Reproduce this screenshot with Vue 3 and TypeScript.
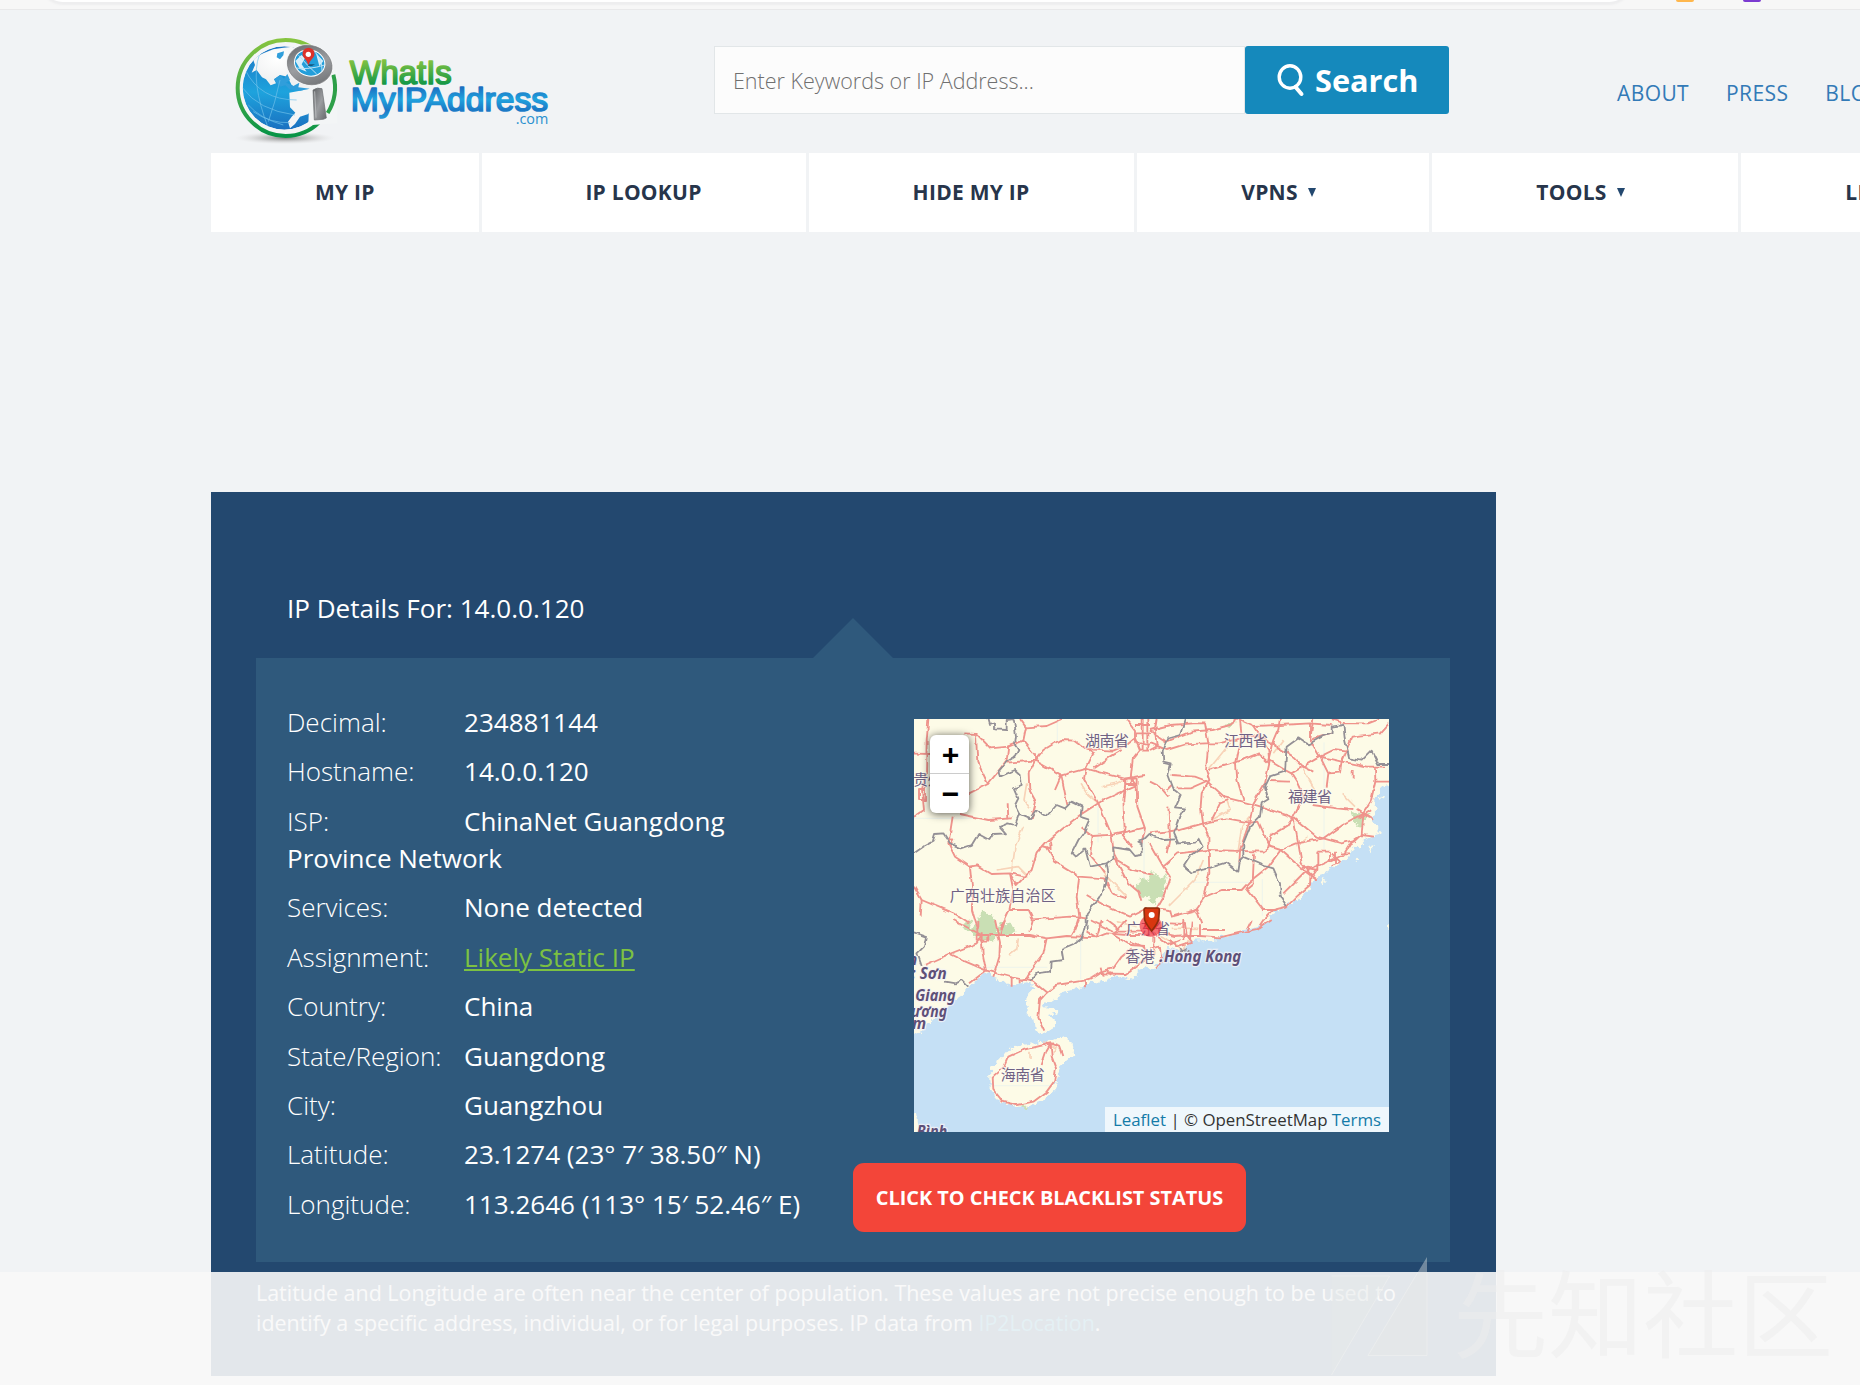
<script setup lang="ts">
interface NavItem { label: string; width: number; arrow?: boolean }
interface Detail { label: string; value: string; link?: boolean }
interface MapTile { shift: string; roads: string[]; minor: string[]; borders: string[] }

const navItems: NavItem[] = [
  { label: 'MY IP', width: 267.5 },
  { label: 'IP LOOKUP', width: 324 },
  { label: 'HIDE MY IP', width: 325 },
  { label: 'VPNS', width: 292, arrow: true },
  { label: 'TOOLS', width: 306, arrow: true },
  { label: 'LEARN', width: 306, arrow: true },
]

const details: Detail[] = [
  { label: 'Decimal:', value: '234881144' },
  { label: 'Hostname:', value: '14.0.0.120' },
  { label: 'ISP:', value: 'ChinaNet Guangdong Province Network' },
  { label: 'Services:', value: 'None detected' },
  { label: 'Assignment:', value: 'Likely Static IP', link: true },
  { label: 'Country:', value: 'China' },
  { label: 'State/Region:', value: 'Guangdong' },
  { label: 'City:', value: 'Guangzhou' },
  { label: 'Latitude:', value: '23.1274 (23° 7′ 38.50″ N)' },
  { label: 'Longitude:', value: '113.2646 (113° 15′ 52.46″ E)' },
]

const tiles: MapTile[] = [
  {
    shift: 'translate(-42 -27)',
    roads: [
      'M85 27L80 95L78 190L66 238L72 300L42 320', 'M42 131L90 132', 'M57 237H75V270H57Z',
      'M190 70L230 72L272 115L325 110L370 92L378 52L360 27', 'M378 52L440 48L488 27',
      'M228 75L232 155L264 222L290 190L320 150L325 110', 'M207 250L264 222', 'M320 158L405 152L430 120L480 90L525 92L560 118L640 122L680 105L705 85',
      'M370 92L405 135L405 152L484 196L558 176L580 130L560 118', 'M405 152L386 190L388 240L408 275L395 325', 'M484 196L502 285', 'M484 196L465 240',
      'M558 176L674 206L735 195', 'M680 27L705 60L705 85L720 122H750', 'M705 45H750M708 70H750M706 100H750M728 27V122M742 27V122', 'M720 122L698 150L692 206L710 226L712 290L735 355L725 400', 'M674 206L676 222L670 270L674 355L668 375L700 415',
      'M676 206H710V222H676ZM692 206V222', 'M580 175L632 140L665 120', 'M558 176L552 205L595 280L635 375L640 420L655 465L685 520L715 545L724 575',
      'M710 226L610 270L540 315L495 350L440 395L410 430L395 480L375 500L350 525L332 495', 'M545 355L578 378L640 374L735 352', 'M578 378L570 435L600 470L615 490',
      'M158 320L150 370L145 400L165 440L210 470L216 530L216 600L234 660', 'M180 312L265 330L335 325', 'M323 280L325 328', 'M210 470L232 466L275 492L330 490L375 500', 'M428 408L452 415L450 395', 'M440 410L465 455L538 500L615 505L635 550L680 565',
      'M538 500L530 560L538 620L525 660', 'M42 530L65 570L160 610L205 640', 'M330 490L340 540L328 600L300 660', 'M328 600L385 600L398 628L510 620L560 625', 'M640 445L700 480L760 495', 'M560 555L620 590L690 620L730 600', 'M65 570L62 620',
      'M145 388H160L150 405L145 388',
    ],
    minor: ['M370 350L345 410L335 485', 'M380 220L372 270L390 295', 'M605 230L650 220L670 210', 'M540 220L560 250L595 280', 'M290 480L355 470L385 500', 'M600 470L620 500L680 560'],
    borders: [
      'M265 27L270 45L285 40L285 58L320 60V30L340 27L345 50L348 80L345 105L355 120L345 140L320 155L295 185L300 200L345 180L362 195L365 225L342 235L355 265L345 285L358 310L345 345L325 340L300 350L318 370L280 372L268 390L235 372L215 405L185 415L150 400L130 370L105 372L98 395L70 410L42 430',
      'M355 310L390 325L408 300L440 318L470 285L495 295L515 275L545 290L542 320L568 328L550 370L535 390L515 430L525 440L555 415L570 470L620 460L625 490L615 530L600 560L575 590L560 610L560 660',
      'M620 460L640 445V412L690 420L705 438L725 435V400L715 395L730 390L750 370',
    ],
  },
  {
    shift: 'translate(708 -27)',
    roads: [
      'M0 60L60 45L130 40L165 40L175 100L168 180L178 210L155 250L152 290L160 345L175 380L178 490L160 560', 'M0 62L50 95L125 65L185 60L240 45L265 27L310 48L390 45L480 40L545 45',
      'M0 100L50 120L105 103L165 100L205 100L320 75L380 110', 'M20 27L15 60L20 110L0 120', 'M270 30L275 80L258 160L262 210L280 270', 'M310 48L355 120L358 160L345 220L310 280L300 330L270 420L268 460',
      'M390 27L385 55L370 90L355 150L405 180L424 190L440 215L460 260L430 320', 'M175 180L258 157L325 130L358 160', 'M65 195L135 200L170 213L225 262L310 283L350 295L430 322L500 380L575 400L620 388',
      'M80 235L120 235L170 213', 'M0 370L90 360L160 340L230 325L300 338L325 335L360 410L392 420L460 480L500 510', 'M185 330L210 280L235 270', 'M430 322L410 350L360 380L355 415L340 425L175 420L85 430L40 470', 'M392 420L355 470L298 515L275 540L215 540L165 560L135 600',
      'M0 400L40 470L60 500L40 560L20 595L60 600L65 620L140 600L155 640', 'M312 430L308 520L290 535L340 600L380 600', 'M430 322L445 400L455 460L482 490L480 525L440 560L410 590L370 600L340 630L320 660',
      'M392 420L440 400L520 385L575 345L640 310L672 330', 'M400 550L470 480L510 465L580 435L605 395L635 375L672 380', 'M490 27L480 90L510 140L535 190L530 230', 'M424 190L510 140L575 155L650 170L705 170', 'M510 140L550 120L590 125', 'M380 110L430 140L460 170L490 185', 'M535 190L570 188L575 155L590 120L605 80L690 70L717 40', 'M480 40L480 90L545 70', 'M545 27L585 40L655 40L690 27', 'M675 172L676 215H717', 'M676 215L662 275L640 310L635 375L615 395', 'M608 180V205',
      'M488 285L560 295L610 300', 'M505 425H540V455M505 425V480L455 470', 'M545 430L570 455L545 465M555 425V460M570 430H600M450 475L490 495L500 480', 'M360 213L420 215', 'M50 240L65 225', 'M620 300L660 325M625 325L665 300',
      'M55 290L60 380L50 430', 'M0 215L30 230L55 260',
    ],
    minor: ['M240 100L175 180', 'M185 330L240 300L230 270', 'M265 420L275 350L300 320', 'M455 170L495 240', 'M575 250L615 290', 'M60 585L135 510L160 450', 'M400 90L370 130', 'M445 400L475 380'],
    borders: [
      'M105 27L90 75L55 85L38 125L40 155L62 160L55 195L72 240L92 255L75 292L102 295L88 320L72 370L85 400L135 398L145 385L158 410L120 440L102 468L125 488L165 478L230 458L265 485L270 450L280 440L280 400L300 350L330 320L335 280L355 268L345 230L360 200L405 185L410 110L445 85L460 95L475 103L520 78L545 70V50L580 45L585 90L598 145L635 152L665 122L685 162H717',
      'M0 375L40 390L75 388', 'M278 440L345 468L370 475L390 520L392 560L410 588',
    ],
  },
  {
    shift: 'translate(-42 603)',
    roads: [
      'M75 135L148 102L230 70L245 45L160 0', 'M148 102L190 122L260 152L335 172L400 185L440 218L420 240L415 290L436 335', 'M210 190L258 152L248 100L246 65', 'M230 45H265V62H230ZM245 37V72', 'M232 0V45', 'M268 45H390L440 55L430 100L400 140L380 175L360 182', 'M285 0L300 70L298 110L280 170M315 0L300 45M398 0L388 35', 'M440 55L500 48L590 52L620 40L680 45L750 45', 'M540 0L515 45M560 35L590 52L605 0M680 0L640 45L690 75L735 78',
      'M440 218L470 195L550 182L575 175L610 152L640 145L665 110L695 85', 'M600 160L680 162L710 140L735 120', 'M335 170V200M362 178V190M555 182V202M602 140L608 170M620 150L630 165', 'M570 0L640 35H735M620 0L660 30M690 65L730 80L745 100',
      'M452 370L440 390L425 435', 'M452 370L455 410L468 445L462 485L440 515L400 545L350 555L308 545L280 510L278 470L312 440L325 410L370 390L452 370L480 380L490 408', 'M438 372L462 370',
    ],
    minor: ['M355 55L350 90L330 105', 'M390 395V415', 'M430 365L470 385L460 400', 'M650 5L710 20'],
    borders: ['M42 37L78 50L72 80L52 100L65 138', 'M135 185L165 190L185 180L205 200', 'M390 185L410 160L450 155L452 125L490 120L485 90L520 75L545 55L560 0'],
  },
  {
    shift: 'translate(708 603)',
    roads: ['M60 10L105 12L110 48L150 48L150 10M100 0V60M125 5L120 60', 'M40 40L75 48L110 45L125 65L80 80L60 60', 'M150 48L210 52L270 38L330 25L365 0', 'M155 30H225M290 30L305 0', 'M0 35L25 50L55 75L90 60M0 85L30 80L35 130L15 145M10 50V110'],
    minor: ['M60 60L100 90L115 60', 'M30 45L70 70', 'M65 25H145'],
    borders: ['M90 95L110 85M90 85L120 100'],
  },
]
</script>

<template>
  <div class="page">
    <div class="browser-edge">
      <div class="address-pill"></div>
      <i class="ext orange"></i><i class="ext purple"></i>
    </div>

    <header class="header">
      <svg class="logo" viewBox="99 108 951 327" width="317" height="109">
        <defs>
          <linearGradient id="ring" x1="0" y1="0" x2="0" y2="1"><stop offset="0" stop-color="#86c440" /><stop offset=".6" stop-color="#3ba648" /><stop offset="1" stop-color="#079447" /></linearGradient>
          <linearGradient id="ocean" x1="0" y1="0" x2="0" y2="1"><stop offset="0" stop-color="#1b75c4" /><stop offset=".55" stop-color="#1ea3dd" /><stop offset="1" stop-color="#1a70c0" /></linearGradient>
          <linearGradient id="greenText" x1="0" y1="180" x2="0" y2="255" gradientUnits="userSpaceOnUse"><stop offset="0" stop-color="#83c341" /><stop offset="1" stop-color="#109647" /></linearGradient>
          <linearGradient id="blueText" x1="0" y1="262" x2="0" y2="352" gradientUnits="userSpaceOnUse"><stop offset="0" stop-color="#1b6fc0" /><stop offset=".4" stop-color="#20a3de" /><stop offset=".75" stop-color="#1b78c5" /><stop offset="1" stop-color="#2496d6" /></linearGradient>
          <linearGradient id="steel" x1="0" y1="0" x2="1" y2="1"><stop offset="0" stop-color="#616366" /><stop offset=".5" stop-color="#9b9da0" /><stop offset="1" stop-color="#67696c" /></linearGradient>
          <radialGradient id="shade"><stop offset="0" stop-color="#777" stop-opacity=".9" /><stop offset=".5" stop-color="#aaa" stop-opacity=".5" /><stop offset="1" stop-color="#ddd" stop-opacity="0" /></radialGradient>
          <radialGradient id="snow" cx=".4" cy=".3"><stop offset="0" stop-color="#fff" /><stop offset="1" stop-color="#f0f1f2" /></radialGradient>
          <clipPath id="globeClip"><circle cx="253" cy="264" r="125" /></clipPath>
        </defs>
        <ellipse cx="255" cy="414" rx="150" ry="19" fill="url(#shade)" />
        <circle cx="257" cy="264" r="144" fill="#f4f5f6" stroke="url(#ring)" stroke-width="12" />
        <g clip-path="url(#globeClip)">
          <circle cx="253" cy="264" r="125" fill="url(#ocean)" />
          <path d="M158 175L190 160L220 148L250 143L300 138L345 200L350 268L300 270L275 255L262 230L240 225L222 238L228 250L212 256L198 238L186 232L170 210L155 218L165 195Z" fill="url(#snow)" />
          <path d="M268 278L300 272L350 262L385 290L350 350L330 332L325 342L300 350L285 372L270 385L264 365L275 350L286 338L270 322Z" fill="#f3f5f6" />
          <path d="M232 160L252 154L250 166L240 178L230 172ZM222 238L240 226L252 236L262 222L270 240L258 248L280 258L298 248L295 262L330 266L300 272L268 268L256 256L240 260Z" fill="#309edb" />
          <path d="M128 264Q175 330 285 345M136 210Q180 300 290 300M160 335Q210 370 270 368M178 165Q150 240 205 385M240 240Q225 310 205 365M145 315Q180 355 250 375" fill="none" stroke="#72c3ec" stroke-width="2" />
        </g>
        <path d="M329 255L343 248Q400 220 412 205V370L325 376Z" fill="#f3f5f6" />
        <path d="M400 224A148 148 0 0 1 383 339" fill="none" stroke="#2d9f48" stroke-width="12" />
        <ellipse cx="329" cy="195" rx="73" ry="61" fill="#f6f7f8" transform="rotate(20 329 195)" />
        <ellipse cx="329" cy="195" rx="68" ry="58" fill="url(#steel)" stroke="#77797c" stroke-width="2" transform="rotate(20 329 195)" />
        <ellipse cx="329" cy="189" rx="46" ry="39" fill="#239eda" stroke="#fff" stroke-width="3" transform="rotate(15 329 189)" />
        <path d="M286 183L304 165L315 174L305 193L320 215L300 207ZM348 160L370 183L358 199Z" fill="#d8effa" />
        <path d="M288 204Q325 210 374 195M296 166Q325 200 350 222M339 151Q368 175 366 213" fill="none" stroke="#bce3f7" stroke-width="3" />
        <path d="M326 193H345L336 198H324Z" fill="#155780" />
        <path d="M325 195Q321 182 312 173A18 18 0 1 1 339 173Q330 182 325 195Z" fill="#dd322b" />
        <circle cx="325" cy="163" r="8" fill="#fff" />
        <path d="M339 270Q352 261 366 266L379 354L370 358L343 360Z" fill="url(#steel)" stroke="#686b6e" stroke-width="2" />
        <path d="M344 274L348 353" stroke="#b6b8ba" stroke-width="3" />
        <text x="449" y="252" textLength="306" lengthAdjust="spacingAndGlyphs" class="logo-text" fill="url(#greenText)" stroke="url(#greenText)">WhatIs</text>
        <text x="452" y="334" textLength="592" lengthAdjust="spacingAndGlyphs" class="logo-text" fill="url(#blueText)" stroke="url(#blueText)">MyIPAddress</text>
        <text x="947" y="371" textLength="98" lengthAdjust="spacingAndGlyphs" class="logo-com">.com</text>
      </svg>
      <form class="search" @submit.prevent>
        <div class="search-field">Enter Keywords or IP Address...</div>
        <button class="search-button">
          <svg width="28" height="34" viewBox="0 0 28 34"><ellipse cx="13" cy="14" rx="10.8" ry="11.2" fill="none" stroke="#fff" stroke-width="3.4" /><path d="M18.5 24L24.5 31" stroke="#fff" stroke-width="4" stroke-linecap="round" /></svg>
          <span>Search</span>
        </button>
      </form>
      <div class="top-links"><a>ABOUT</a><a>PRESS</a><a>BLOG</a></div>
    </header>

    <nav class="nav">
      <a v-for="item in navItems" :key="item.label" :style="{ width: item.width + 'px' }"><span>{{ item.label }}</span><i v-if="item.arrow"></i></a>
    </nav>

    <main class="panel">
      <h1>IP Details For: 14.0.0.120</h1>
      <section class="details">
        <div class="pointer"></div>
        <div class="facts">
          <p v-for="d in details" :key="d.label"><span class="label">{{ d.label }}</span><a v-if="d.link">{{ d.value }}</a><span v-else class="value">{{ d.value }}</span></p>
        </div>
        <div class="side">
          <div class="map">
            <svg class="terrain" viewBox="0 0 1425 1239">
              <defs>
                <filter id="rough" x="-5%" y="-5%" width="110%" height="110%"><feTurbulence type="fractalNoise" baseFrequency=".045" numOctaves="1" seed="4" /><feDisplacementMap in="SourceGraphic" scale="14" xChannelSelector="R" yChannelSelector="G" /><feGaussianBlur stdDeviation=".9" /></filter>
                <filter id="coast" x="-5%" y="-5%" width="110%" height="110%"><feTurbulence type="fractalNoise" baseFrequency=".06" numOctaves="3" seed="9" /><feDisplacementMap in="SourceGraphic" scale="26" xChannelSelector="R" yChannelSelector="G" /></filter>
              </defs>
              <rect width="1425" height="1239" fill="#fdfbe7" />
              <g filter="url(#coast)">
                <path fill="#c5e0f5" d="M1460 190L1425 198L1398 208L1392 230L1378 240L1388 273L1373 303L1398 328L1395 348L1358 358L1335 385L1318 383L1298 423L1260 440L1228 463L1198 485L1180 520L1118 563L1078 585L1058 610L998 630L958 643L938 655L925 645L898 670L878 663L838 665L820 670L808 703L768 683L748 703L738 730L718 753L698 743L673 755L665 775L648 783L598 773L558 793L530 785L503 808L448 818L430 840L400 850L388 868L428 870L435 878L405 888L423 905L423 923L398 943L363 933L358 903L338 883L338 850L343 823L358 808L340 790L288 798L248 783L218 758L183 793L160 805L148 830L108 853L68 883L60 900L18 938L-20 955V1270H1460Z" />
                <path fill="#fdfbe7" d="M228 1043L258 1023L288 988L328 978L388 968L448 955L473 973L478 1008L448 1033L433 1063L423 1113L378 1148L338 1163L288 1158L243 1138L230 1103ZM-20 1170L6 1185L12 1239H-20ZM1420 625L1440 615V645L1420 640ZM1360 385L1380 375L1370 400ZM1395 240L1408 230V245ZM1320 425L1335 418L1328 432ZM1220 490L1235 482L1230 496Z" />
                <path fill="#c9dfb4" d="M145 625L165 600L175 630L205 575L235 590L245 620L250 635L260 610L295 615L305 640L270 655L250 640L235 670L180 650L170 640ZM665 500L690 475L700 490L715 455L720 480L760 465L740 530L715 540L710 550L695 530L685 540ZM708 460L755 480L745 530L725 540L720 560L700 530ZM1310 275L1345 290L1370 280L1345 320L1325 315ZM315 1160H345L330 1170ZM930 25L965 0L950 30Z" />
              </g>
              <g fill="none" stroke-linejoin="round">
                <path d="M0 298H195M552 260V370M835 490H1010M1045 480V590M1230 70V390M430 0V70M690 310V480M500 640V780M185 745H400M235 1100H410" stroke="#e6f0ee" stroke-width="2" />
                <g v-for="tile in tiles" :key="tile.shift" :transform="tile.shift">
                  <g filter="url(#rough)">
                    <path v-for="m in tile.minor" :key="m" :d="m" stroke="#f8d3b8" stroke-width="5" />
                    <path v-for="r in tile.roads" :key="r" :d="r" stroke="#ef938c" stroke-width="5.6" />
                    <path v-for="b in tile.borders" :key="b" :d="b" stroke="#949096" stroke-width="5.4" />
                  </g>
                </g>
              </g>
              <g class="han">
                <text x="513" y="81" textLength="132">湖南省</text><text x="930" y="80" textLength="132">江西省</text><text x="1122" y="250" textLength="132">福建省</text><text x="107" y="545" textLength="318">广西壮族自治区</text><text x="-2" y="198" textLength="88">贵州</text><text x="636" y="645" textLength="132">广东省</text><text x="634" y="730" textLength="88">香港</text><text x="260" y="1083" textLength="132">海南省</text>
              </g>
              <g class="latin">
                <text x="-18" y="738">n</text><text x="-8" y="781" textLength="106" lengthAdjust="spacingAndGlyphs">: Sơn</text><text x="4" y="845" textLength="121" lengthAdjust="spacingAndGlyphs">Giang</text><text x="-8" y="894" textLength="107" lengthAdjust="spacingAndGlyphs">ương</text><text x="-5" y="930">m</text><text x="736" y="730">.</text><text x="750" y="730" textLength="232" lengthAdjust="spacingAndGlyphs">Hong Kong</text><text x="8" y="1253" textLength="92" lengthAdjust="spacingAndGlyphs">Bình</text>
              </g>
              <circle cx="710" cy="620" r="33" fill="#f12d3d" opacity=".68" />
              <circle cx="711" cy="615" r="20" fill="#f00f0f" opacity=".5" />
              <path d="M690 571Q692 566 698 567H730Q737 567 736 575L734 600Q732 612 713 636Q697 616 692 603Z" fill="#d8360f" stroke="#8f2c0d" stroke-width="5" />
              <circle cx="713" cy="588" r="9" fill="#fff" />
            </svg>
            <div class="zoom"><button>+</button><button>−</button></div>
            <div class="credit"><a>Leaflet</a> | © OpenStreetMap <a>Terms</a></div>
          </div>
          <button class="blacklist">CLICK TO CHECK BLACKLIST STATUS</button>
        </div>
      </section>
      <p class="note"><span>Latitude and Longitude are often near the center of population. These values are not precise enough to be used to</span><br /><span>identify a specific address, individual, or for legal purposes. IP data from <a>IP2Location</a>.</span></p>
    </main>

    <div class="veil"></div>
    <div class="watermark">
      <svg width="540" height="135" viewBox="1320 1250 540 135">
        <path d="M1331.5 1276H1389.6L1331.5 1375Z" fill="#e5e8e8" fill-opacity=".45" />
        <path d="M1331.5 1276H1389.6L1331.5 1375" fill="none" stroke="#eef0f0" stroke-opacity=".7" />
        <path d="M1427 1257V1355.5H1368Z" fill="#e7e9e7" fill-opacity=".4" />
        <path d="M1418 1272L1368 1355.5H1427V1272" fill="none" stroke="#eef0f0" stroke-opacity=".7" />
        <text x="1453" y="1351" textLength="380">先知社区</text>
      </svg>
    </div>
  </div>
</template>

<style>
body { margin: 0; overflow: hidden; background: #f1f3f5; }
</style>
<style scoped>
.page { position: relative; width: 1860px; height: 1385px; overflow: hidden; background: #f1f3f5; font-family: 'Open Sans', 'Noto Sans', sans-serif; color: #2c3e50; }
button { border: 0; padding: 0; font-family: inherit; }
.browser-edge { position: relative; box-sizing: border-box; height: 10px; background: #f7f7f7; border-bottom: 1px solid #e9e9ea; overflow: hidden; }
.address-pill { position: absolute; left: 43px; top: -37px; width: 1586px; height: 39px; border-radius: 20px; background: #fff; box-shadow: 0 1px 2px 2px #eeeeef; }
.ext { position: absolute; top: -3px; width: 18px; height: 5px; border-radius: 2px; }
.orange { left: 1676px; background: #ffb74d; }
.purple { left: 1743px; background: #7b3bd1; }
.header { display: flex; box-sizing: border-box; height: 143px; padding: 26px 0 0 233px; align-items: flex-start; }
.logo { flex: none; overflow: visible; }
.logo-text { font: 98px 'Liberation Sans', sans-serif; stroke-width: 5; stroke-linejoin: round; }
.logo-com { font: 42px 'Open Sans', sans-serif; fill: #2a90cf; }
.search { flex: none; display: flex; width: 735px; height: 68px; margin: 10px 0 0 164px; }
.search-field { box-sizing: border-box; width: 531px; height: 68px; padding-left: 18px; border: 1px solid #e2e6e8; background: #fcfcfc; color: #707070; font-size: 21.5px; font-weight: 300; line-height: 68px; white-space: nowrap; }
.search-button { display: flex; width: 204px; height: 68px; box-sizing: border-box; padding-left: 32px; gap: 10px; align-items: center; border-radius: 3px; background: #1589bc; color: #fff; font-size: 30.7px; font-weight: 700; }
.search-button span { line-height: 68px; }
.top-links { flex: none; display: flex; gap: 37px; margin: 41px 0 0 168px; color: #337ab7; font-size: 21px; font-weight: 500; line-height: 32px; letter-spacing: .4px; }
.nav { display: flex; gap: 3px; width: 1860px; margin-left: 211px; height: 79px; }
.nav a { flex: none; display: flex; justify-content: center; align-items: center; gap: 10px; background: #fff; color: #27354b; font-size: 21px; font-weight: 700; line-height: 79px; letter-spacing: .25px; }
.nav i { width: 0; height: 0; margin-right: 8px; border: 4.5px solid transparent; border-top: 9px solid #23486f; border-bottom: 0; }
.panel { box-sizing: border-box; width: 1285px; height: 884px; margin: 260px 0 0 211px; padding: 98px 46px 0 45px; background: #23486f; color: #fff; }
h1 { margin: 0; padding-left: 31px; height: 68px; font-size: 26.05px; font-weight: 400; line-height: 37px; }
.details { position: relative; display: flex; box-sizing: border-box; height: 604px; padding: 46px 0 0 31px; background: #2f597c; }
.pointer { position: absolute; left: 557px; top: -40px; border: 40px solid transparent; border-bottom-color: #2f597c; border-top: 0; }
.facts { width: 566px; flex: none; font-size: 26.02px; line-height: 37.2px; }
.facts p { margin: 0 0 12.2px; max-width: 520px; }
.facts p:nth-child(3) { width: 450px; }
.label { display: inline-block; width: 177px; font-weight: 300; }
.facts a { color: #7cc142; text-decoration: underline; }
.side { flex: none; width: 536px; padding-top: 15px; }
.map { position: relative; width: 475px; height: 413px; margin-left: 61px; overflow: hidden; }
.terrain { display: block; width: 475px; height: 413px; }
.han { font-family: 'Noto Sans CJK SC', sans-serif; font-size: 45px; fill: #6f6184; stroke: #fdfbf2; stroke-width: 7; stroke-opacity: .65; paint-order: stroke; }
.latin { font: italic 700 46px 'Noto Sans', sans-serif; fill: #5e5078; stroke: #f5f3f5; stroke-width: 7; stroke-opacity: .8; paint-order: stroke; }
.zoom { position: absolute; left: 16px; top: 16px; width: 39px; border-radius: 6px; background: #fff; box-shadow: 0 1px 8px rgba(0, 0, 0, .65); }
.zoom button { display: block; width: 39px; height: 39px; padding-left: 2px; background: transparent; color: #000; font: 700 30px/39px 'Liberation Sans', sans-serif; text-align: center; }
.zoom button:first-child { border-bottom: 1px solid #ccc; }
.credit { position: absolute; right: 0; bottom: 0; box-sizing: border-box; width: 284px; height: 25px; padding-left: 8px; background: rgba(255, 255, 255, .72); color: #333; font-size: 16.85px; line-height: 25px; white-space: nowrap; }
.credit a { color: #147ba8; }
.blacklist { display: block; width: 393px; height: 69px; margin-top: 31px; padding-bottom: 1px; border-radius: 11px; background: #f34539; color: #fff; font-size: 19.9px; font-weight: 700; white-space: nowrap; }
.note { margin: 16px 0 0; font-size: 21.43px; line-height: 30px; white-space: nowrap; }
.note a { color: #2ba6cb; }
.veil { position: absolute; left: 0; top: 1272px; width: 1860px; height: 113px; background: rgba(248, 248, 248, .9); }
.watermark { position: absolute; left: 1320px; top: 1250px; width: 540px; height: 135px; }
.watermark svg { display: block; }
.watermark text { font: 95px 'Noto Sans CJK SC', sans-serif; fill: #ededed; fill-opacity: .55; }
</style>
